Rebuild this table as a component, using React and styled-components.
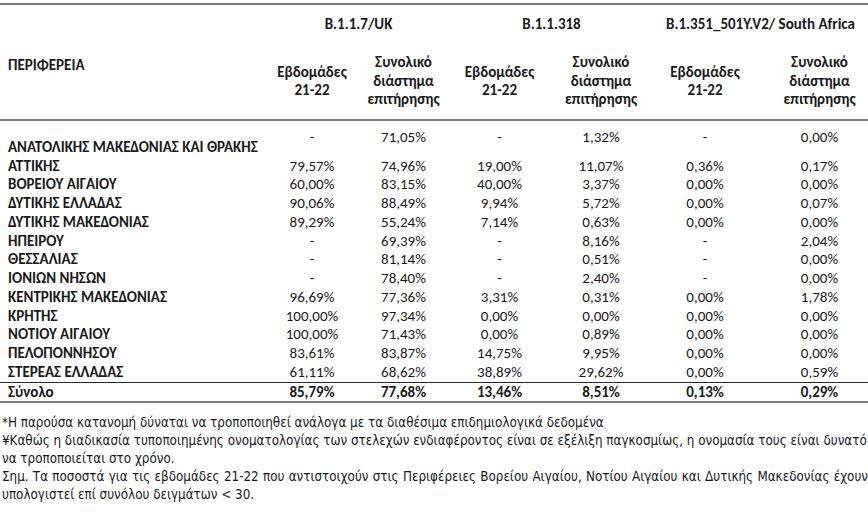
import React from "react";
import styled, { createGlobalStyle } from "styled-components";

const GlobalStyle = createGlobalStyle`
  body {
    margin: 0;
    background: #ffffff;
    font-family: Carlito, Lato, Roboto, "Liberation Sans", sans-serif;
    color: #1a1a1a;
  }
`;

const COLS = "267px 90px 93px 99px 104px 104px 111px";

const Page = styled.div`
  width: 868px;
  padding-top: 3px;
`;

const Head = styled.div`
  display: grid;
  grid-template-columns: ${COLS};
  grid-template-rows: 38px 76px;
  border-top: 2px solid #7a7a7a;
  border-bottom: 2px solid #7a7a7a;
  font-size: 15px;
  font-weight: 700;
`;

const RegionHead = styled.div`
  grid-row: 1 / 3;
  align-self: center;
  padding: 6px 0 0 8px;
`;

const GroupHead = styled.div`
  grid-row: 1;
  grid-column: span 2;
  align-self: center;
  text-align: center;
`;

const SubHead = styled.div`
  grid-row: 2;
  align-self: center;
  text-align: center;
  line-height: 18.5px;
  padding-left: ${(p) => (p.$last ? "14px" : "0")};
`;

const Row = styled.div`
  display: grid;
  grid-template-columns: ${COLS};
  height: ${(p) => (p.$first ? "35.5px" : "18.75px")};
  font-size: 15px;
  line-height: 18.75px;
`;

const Label = styled.div`
  align-self: end;
  padding-left: 8px;
  font-weight: 700;
  white-space: nowrap;
`;

const Cell = styled.div`
  align-self: start;
  text-align: center;
  padding-top: ${(p) => (p.$first ? "7px" : "0")};
  padding-left: ${(p) => (p.$last ? "14px" : "0")};
`;

const TotalRow = styled(Row)`
  height: 18px;
  line-height: 18px;
  font-weight: 700;
  border-top: 1px solid #2a2a2a;
  border-bottom: 2px solid #7a7a7a;
`;

const TotalLabel = styled.div`
  padding-left: 8px;
`;

const Notes = styled.div`
  padding: 11px 0 0 2px;
  font-family: "DejaVu Sans Condensed", "DejaVu Sans", sans-serif;
  font-size: 13.3px;
  line-height: 18.2px;
  color: #1a1a1a;
`;

const NoteLine = styled.div`
  text-align: ${(p) => (p.$justify ? "justify" : "left")};
  text-align-last: ${(p) => (p.$justify ? "justify" : "left")};
  white-space: ${(p) => (p.$justify ? "normal" : "nowrap")};
`;

const rows = [
  ["ΑΝΑΤΟΛΙΚΗΣ ΜΑΚΕΔΟΝΙΑΣ ΚΑΙ ΘΡΑΚΗΣ", "-", "71,05%", "-", "1,32%", "-", "0,00%"],
  ["ΑΤΤΙΚΗΣ", "79,57%", "74,96%", "19,00%", "11,07%", "0,36%", "0,17%"],
  ["ΒΟΡΕΙΟΥ ΑΙΓΑΙΟΥ", "60,00%", "83,15%", "40,00%", "3,37%", "0,00%", "0,00%"],
  ["ΔΥΤΙΚΗΣ ΕΛΛΑΔΑΣ", "90,06%", "88,49%", "9,94%", "5,72%", "0,00%", "0,07%"],
  ["ΔΥΤΙΚΗΣ ΜΑΚΕΔΟΝΙΑΣ", "89,29%", "55,24%", "7,14%", "0,63%", "0,00%", "0,00%"],
  ["ΗΠΕΙΡΟΥ", "-", "69,39%", "-", "8,16%", "-", "2,04%"],
  ["ΘΕΣΣΑΛΙΑΣ", "-", "81,14%", "-", "0,51%", "-", "0,00%"],
  ["ΙΟΝΙΩΝ ΝΗΣΩΝ", "-", "78,40%", "-", "2,40%", "-", "0,00%"],
  ["ΚΕΝΤΡΙΚΗΣ ΜΑΚΕΔΟΝΙΑΣ", "96,69%", "77,36%", "3,31%", "0,31%", "0,00%", "1,78%"],
  ["ΚΡΗΤΗΣ", "100,00%", "97,34%", "0,00%", "0,00%", "0,00%", "0,00%"],
  ["ΝΟΤΙΟΥ ΑΙΓΑΙΟΥ", "100,00%", "71,43%", "0,00%", "0,89%", "0,00%", "0,00%"],
  ["ΠΕΛΟΠΟΝΝΗΣΟΥ", "83,61%", "83,87%", "14,75%", "9,95%", "0,00%", "0,00%"],
  ["ΣΤΕΡΕΑΣ ΕΛΛΑΔΑΣ", "61,11%", "68,62%", "38,89%", "29,62%", "0,00%", "0,59%"],
];

const totals = ["85,79%", "77,68%", "13,46%", "8,51%", "0,13%", "0,29%"];

const groups = ["B.1.1.7/UK", "B.1.1.318", "B.1.351_501Y.V2/ South Africa"];

export default function App() {
  return (
    <Page>
      <GlobalStyle />
      <Head>
        <RegionHead>ΠΕΡΙΦΕΡΕΙΑ</RegionHead>
        {groups.map((g) => (
          <GroupHead key={g}>{g}</GroupHead>
        ))}
        {groups.map((g, i) => (
          <React.Fragment key={g}>
            <SubHead>
              Εβδομάδες
              <br />
              21-22
            </SubHead>
            <SubHead $last={i === 2}>
              Συνολικό
              <br />
              διάστημα
              <br />
              επιτήρησης
            </SubHead>
          </React.Fragment>
        ))}
      </Head>
      {rows.map(([name, ...vals], r) => (
        <Row key={name} $first={r === 0}>
          <Label>{name}</Label>
          {vals.map((v, i) => (
            <Cell key={i} $first={r === 0} $last={i === 5}>
              {v}
            </Cell>
          ))}
        </Row>
      ))}
      <TotalRow>
        <TotalLabel>Σύνολο</TotalLabel>
        {totals.map((v, i) => (
          <Cell key={i} $last={i === 5}>
            {v}
          </Cell>
        ))}
      </TotalRow>
      <Notes>
        <NoteLine>
          *Η παρούσα κατανομή δύναται να τροποποιηθεί ανάλογα με τα διαθέσιμα επιδημιολογικά δεδομένα
        </NoteLine>
        <NoteLine>
          ¥Καθώς η διαδικασία τυποποιημένης ονοματολογίας των στελεχών ενδιαφέροντος είναι σε εξέλιξη παγκοσμίως, η ονομασία τους είναι δυνατό
        </NoteLine>
        <NoteLine>να τροποποιείται στο χρόνο.</NoteLine>
        <NoteLine $justify>
          Σημ. Τα ποσοστά για τις εβδομάδες 21-22 που αντιστοιχούν στις Περιφέρειες Βορείου Αιγαίου, Νοτίου Αιγαίου και Δυτικής Μακεδονίας έχουν
        </NoteLine>
        <NoteLine>υπολογιστεί επί συνόλου δειγμάτων &lt; 30.</NoteLine>
      </Notes>
    </Page>
  );
}
